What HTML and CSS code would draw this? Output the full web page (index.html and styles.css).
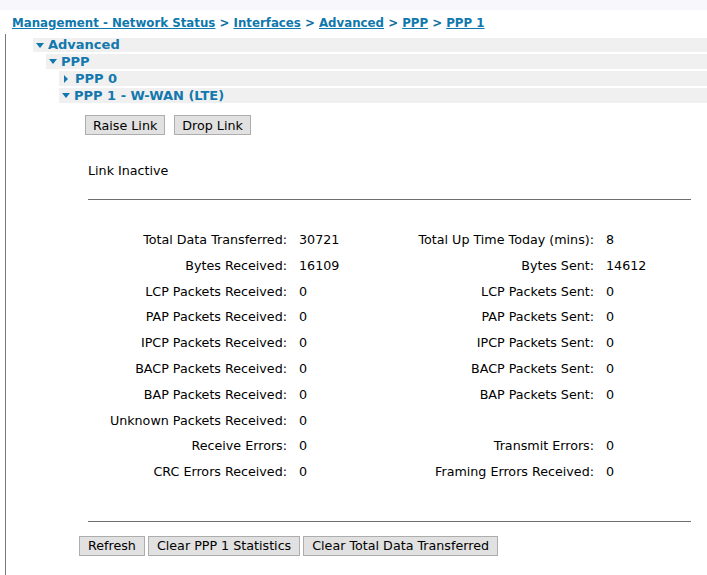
FILE: index.html
```html
<!DOCTYPE html>
<html>
<head>
<meta charset="utf-8">
<link rel="stylesheet" href="styles.css">
</head>
<body>
<div class="topbar"></div>
<div class="crumbs">
  <a href="#">Management - Network Status</a> &gt; <a href="#">Interfaces</a> &gt; <a href="#">Advanced</a> &gt; <a href="#">PPP</a> &gt; <a href="#">PPP 1</a>
</div>
<div class="main">
  <div class="tree">
    <div class="node lvl1"><span class="tri down"></span>Advanced</div>
    <div class="node lvl2"><span class="tri down"></span>PPP</div>
    <div class="node lvl3"><span class="tri right"></span>PPP 0</div>
    <div class="node lvl3"><span class="tri down"></span>PPP 1 - W-WAN (LTE)</div>
  </div>
  <div class="content">
    <div class="btnrow top">
      <button class="btn">Raise Link</button>
      <button class="btn">Drop Link</button>
    </div>
    <div class="status">Link Inactive</div>
    <hr class="rule">
    <div class="stats">
      <div class="lbl">Total Data Transferred:</div><div class="val">30721</div><div class="lbl">Total Up Time Today (mins):</div><div class="val">8</div>
      <div class="lbl">Bytes Received:</div><div class="val">16109</div><div class="lbl">Bytes Sent:</div><div class="val">14612</div>
      <div class="lbl">LCP Packets Received:</div><div class="val">0</div><div class="lbl">LCP Packets Sent:</div><div class="val">0</div>
      <div class="lbl">PAP Packets Received:</div><div class="val">0</div><div class="lbl">PAP Packets Sent:</div><div class="val">0</div>
      <div class="lbl">IPCP Packets Received:</div><div class="val">0</div><div class="lbl">IPCP Packets Sent:</div><div class="val">0</div>
      <div class="lbl">BACP Packets Received:</div><div class="val">0</div><div class="lbl">BACP Packets Sent:</div><div class="val">0</div>
      <div class="lbl">BAP Packets Received:</div><div class="val">0</div><div class="lbl">BAP Packets Sent:</div><div class="val">0</div>
      <div class="lbl">Unknown Packets Received:</div><div class="val">0</div><div class="lbl"></div><div class="val"></div>
      <div class="lbl">Receive Errors:</div><div class="val">0</div><div class="lbl">Transmit Errors:</div><div class="val">0</div>
      <div class="lbl">CRC Errors Received:</div><div class="val">0</div><div class="lbl">Framing Errors Received:</div><div class="val">0</div>
    </div>
    <hr class="rule bottom">
    <div class="btnrow bot">
      <button class="btn">Refresh</button>
      <button class="btn">Clear PPP 1 Statistics</button>
      <button class="btn">Clear Total Data Transferred</button>
    </div>
  </div>
</div>
</body>
</html>
```
FILE: styles.css
```css
html, body {
  margin: 0;
  padding: 0;
  background: #fff;
  font-family: "DejaVu Sans", sans-serif;
  font-size: 12.7px;
  color: #000;
}
.topbar {
  height: 10px;
  background: #f8f8fc;
}
.crumbs {
  padding: 5px 0 0 12px;
  height: 19px;
  font-family: "DejaVu Sans", sans-serif;
  font-weight: bold;
  font-size: 11.8px;
  color: #0f6f9f;
  line-height: 17px;
}
.crumbs a {
  color: #0f78ad;
  text-decoration: underline;
}
.main {
  margin-left: 5px;
  border-left: 1px solid #7a7a7a;
  padding-top: 4px;
  min-height: 540px;
}
.tree {
  display: flex;
  flex-direction: column;
  gap: 2px;
}
.node {
  background: #f0f0f0;
  height: 15px;
  line-height: 14px;
  font-family: "DejaVu Sans", sans-serif;
  font-weight: bold;
  font-size: 13px;
  color: #1278ad;
  display: flex;
  align-items: center;
}
.lvl1 { margin-left: 27px; height: 14px; }
.lvl2 { margin-left: 40px; }
.lvl3 { margin-left: 53px; }
.tri {
  display: inline-block;
  width: 0;
  height: 0;
  margin-left: 3px;
  margin-right: 4px;
}
.tri.down {
  border-left: 4px solid transparent;
  border-right: 4px solid transparent;
  border-top: 5px solid #1278ad;
}
.tri.right {
  margin-left: 5px;
  margin-right: 7px;
  border-top: 4px solid transparent;
  border-bottom: 4px solid transparent;
  border-left: 4px solid #1278ad;
}
.content {
  padding-left: 73px;
  padding-right: 16px;
}
.btnrow {
  display: flex;
}
.btnrow.top {
  margin-top: 12px;
  margin-left: 6px;
  gap: 9px;
}
.btnrow.top .btn {
  padding: 0 7px;
}
.btnrow.bot {
  margin-top: 14px;
  gap: 3px;
}
.btn {
  font-family: "DejaVu Sans", sans-serif;
  font-size: 12.7px;
  height: 20px;
  padding: 0 8px;
  background: #e1e1e1;
  border: 1px solid #adadad;
  border-radius: 0;
  color: #000;
  line-height: 17px;
}
.status {
  margin-top: 28px;
  margin-left: 9px;
  height: 16px;
  line-height: 16px;
}
.rule {
  border: 0;
  border-top: 1px solid #6e6e6e;
  margin: 20px 0 0 9px;
  height: 0;
}
.stats {
  margin-top: 27px;
  margin-left: 9px;
  display: grid;
  grid-template-columns: 199px 118px 189px 1fr;
  grid-auto-rows: 25.8px;
  line-height: 25.8px;
  align-items: center;
}
.lbl { text-align: right; }
.val { padding-left: 12px; }
.rule.bottom {
  margin-top: 36px;
}
```
